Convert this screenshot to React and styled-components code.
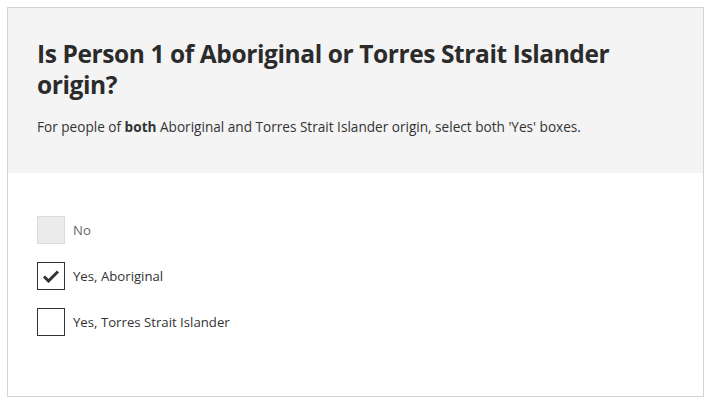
import styled, { createGlobalStyle } from 'styled-components';

const GlobalStyle = createGlobalStyle`
  body {
    margin: 0;
    padding: 7px;
    font-family: "Open Sans", "Noto Sans", sans-serif;
    color: #333;
    background: #fff;
  }
`;

const Card = styled.section`
  width: 697px;
  height: 390px;
  box-sizing: border-box;
  border: 1px solid #d4d4d4;
  display: flex;
  flex-flow: column nowrap;
`;

const Header = styled.header`
  background: #f4f4f4;
  padding: 30px 29px 0 29px;
  height: 165px;
  box-sizing: border-box;
`;

const Title = styled.h1`
  margin: 0;
  font-size: 24.5px;
  line-height: 31px;
  font-weight: 700;
  color: #2b2b2b;
  letter-spacing: -0.4px;
  max-width: 600px;
`;

const Hint = styled.p`
  margin: 18px 0 0 0;
  font-size: 13.6px;
  line-height: 18px;
  color: #333;

  b {
    font-weight: 700;
  }
`;

const Options = styled.div`
  padding: 43px 29px 0 29px;
  display: flex;
  flex-flow: column nowrap;
  gap: 18px;
`;

const Option = styled.label`
  display: flex;
  align-items: center;
  gap: 8px;
  font-size: 13.2px;
  color: ${p => (p.$disabled ? '#666' : '#333')};
`;

const Box = styled.span`
  width: 28px;
  height: 28px;
  box-sizing: border-box;
  border: ${p => (p.$disabled ? '1px solid #dcdcdc' : '1px solid #333')};
  background: ${p => (p.$disabled ? '#ebebeb' : '#fff')};
  display: flex;
  align-items: center;
  justify-content: center;
`;

const Check = () => (
  <svg width="18" height="14" viewBox="0 0 18 14">
    <path d="M2 7.5 L6.5 12 L16 2.5" fill="none" stroke="#333" strokeWidth="3" />
  </svg>
);

const options = [
  { label: 'No', disabled: true },
  { label: 'Yes, Aboriginal', checked: true },
  { label: 'Yes, Torres Strait Islander' },
];

export default function App() {
  return (
    <>
      <GlobalStyle />
      <Card>
        <Header>
          <Title>Is Person 1 of Aboriginal or Torres Strait Islander origin?</Title>
          <Hint>
            For people of <b>both</b> Aboriginal and Torres Strait Islander origin, select both 'Yes' boxes.
          </Hint>
        </Header>
        <Options>
          {options.map(o => (
            <Option key={o.label} $disabled={o.disabled}>
              <Box $disabled={o.disabled}>{o.checked && <Check />}</Box>
              {o.label}
            </Option>
          ))}
        </Options>
      </Card>
    </>
  );
}
